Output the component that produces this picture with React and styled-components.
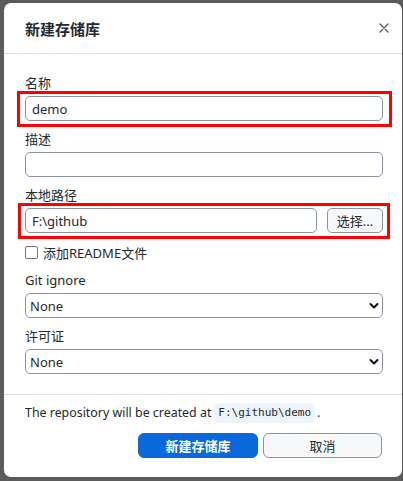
import React from "react";
import styled, { createGlobalStyle } from "styled-components";

const GlobalStyle = createGlobalStyle`
  html, body { margin: 0; padding: 0; }
  body {
    background: #5b5b5b;
    font-family: "Noto Sans", "Noto Sans CJK SC", sans-serif;
    color: #24292f;
    width: 403px;
    height: 481px;
    overflow: hidden;
  }
  * { box-sizing: border-box; }
`;

const Backdrop = styled.div`
  padding: 3px 0 0 4px;
`;

const Dialog = styled.div`
  width: 398px;
  height: 474px;
  background: #ffffff;
  border-radius: 7px;
  display: flex;
  flex-direction: column;
  overflow: hidden;
`;

const Header = styled.div`
  height: 51px;
  border-bottom: 1px solid #d8dee4;
  display: flex;
  align-items: center;
  justify-content: space-between;
  padding: 0 10px 0 21px;
`;

const Title = styled.h1`
  margin: 0;
  font-size: 15px;
  font-weight: 600;
  color: #24292f;
`;

const CloseButton = styled.button`
  border: none;
  background: none;
  padding: 0;
  width: 16px;
  height: 16px;
  display: flex;
  align-items: center;
  justify-content: center;
  color: #57606a;
`;

const Body = styled.div`
  padding: 20px 19px 20px 21px;
  display: flex;
  flex-direction: column;
  gap: 9px;
`;

const Field = styled.div`
  display: flex;
  flex-direction: column;
  gap: 4px;
`;

const Label = styled.label`
  font-size: 13px;
  line-height: 18px;
  color: #24292f;
`;

const Highlight = styled.div`
  position: relative;
  &::after {
    content: "";
    position: absolute;
    top: -5px;
    bottom: -6px;
    left: ${(p) => p.$left}px;
    right: ${(p) => p.$right}px;
    border: 3px solid #ff0000;
    pointer-events: none;
  }
`;

const TextInput = styled.div`
  flex: 1;
  height: 25px;
  border: 1px solid #8c959f;
  border-radius: 5px;
  padding: 0 6px;
  display: flex;
  align-items: center;
  font-size: 13px;
  color: #24292f;
`;

const Row = styled.div`
  display: flex;
  gap: 10px;
`;

const SmallButton = styled.button`
  width: 56px;
  height: 25px;
  border: 1px solid #8c959f;
  border-radius: 5px;
  background: #f6f8fa;
  font-family: inherit;
  font-size: 13px;
  color: #24292f;
  padding: 0;
`;

const CheckRow = styled.div`
  display: flex;
  align-items: center;
  gap: 5px;
  height: 20px;
  font-size: 13px;
`;

const CheckBox = styled.span`
  width: 13px;
  height: 13px;
  border: 1px solid #6e7781;
  border-radius: 2px;
  background: #fff;
`;

const Select = styled.div`
  height: 25px;
  border: 1px solid #8c959f;
  border-radius: 5px;
  padding: 0 2px 0 4px;
  display: flex;
  align-items: center;
  justify-content: space-between;
  font-size: 13px;
  color: #24292f;
`;

const Footer = styled.div`
  border-top: 1px solid #d8dee4;
  padding: 8px 20px 0 21px;
  display: flex;
  flex-direction: column;
  gap: 10px;
`;

const Note = styled.div`
  font-size: 12.4px;
  line-height: 20px;
  color: #24292f;
  display: flex;
  align-items: center;
`;

const Code = styled.code`
  font-family: "DejaVu Sans Mono", monospace;
  font-size: 11px;
  background: #eef4fc;
  border-radius: 6px;
  padding: 0 4px;
  height: 20px;
  line-height: 20px;
  margin: 0 2px 0 3px;
`;

const Actions = styled.div`
  display: flex;
  justify-content: flex-end;
  gap: 5px;
`;

const ActionButton = styled.button`
  width: ${(p) => p.$w}px;
  height: 25px;
  border-radius: 6px;
  font-family: inherit;
  font-size: 13px;
  padding: 0;
  border: 1px solid ${(p) => (p.$primary ? "#0969da" : "#8c959f")};
  background: ${(p) => (p.$primary ? "#0969da" : "#f6f8fa")};
  color: ${(p) => (p.$primary ? "#ffffff" : "#24292f")};
  font-weight: ${(p) => (p.$primary ? 600 : 400)};
`;

const Chevron = () => (
  <svg width="12" height="8" viewBox="0 0 12 8">
    <path d="M2.5 2 L6 5.5 L9.5 2" fill="none" stroke="#111" strokeWidth="2" strokeLinecap="round" strokeLinejoin="round" />
  </svg>
);

export default function App() {
  return (
    <>
      <GlobalStyle />
      <Backdrop>
        <Dialog>
          <Header>
            <Title>新建存储库</Title>
            <CloseButton aria-label="close">
              <svg width="10" height="10" viewBox="0 0 10 10">
                <path d="M1 1 L9 9 M9 1 L1 9" stroke="#57606a" strokeWidth="1.4" strokeLinecap="round" />
              </svg>
            </CloseButton>
          </Header>
          <Body>
            <Field>
              <Label>名称</Label>
              <Highlight $left={-8} $right={-9}>
                <Row>
                  <TextInput>demo</TextInput>
                </Row>
              </Highlight>
            </Field>
            <Field>
              <Label>描述</Label>
              <Row>
                <TextInput />
              </Row>
            </Field>
            <Field>
              <Label>本地路径</Label>
              <Highlight $left={-7} $right={-7}>
                <Row>
                  <TextInput>F:\github</TextInput>
                  <SmallButton>选择...</SmallButton>
                </Row>
              </Highlight>
            </Field>
            <CheckRow>
              <CheckBox />
              <span>添加README文件</span>
            </CheckRow>
            <Field>
              <Label>Git ignore</Label>
              <Select>
                <span>None</span>
                <Chevron />
              </Select>
            </Field>
            <Field>
              <Label>许可证</Label>
              <Select>
                <span>None</span>
                <Chevron />
              </Select>
            </Field>
          </Body>
          <Footer>
            <Note>
              The repository will be created at<Code>F:\github\demo</Code>.
            </Note>
            <Actions>
              <ActionButton $primary $w={120}>新建存储库</ActionButton>
              <ActionButton $w={119}>取消</ActionButton>
            </Actions>
          </Footer>
        </Dialog>
      </Backdrop>
    </>
  );
}
